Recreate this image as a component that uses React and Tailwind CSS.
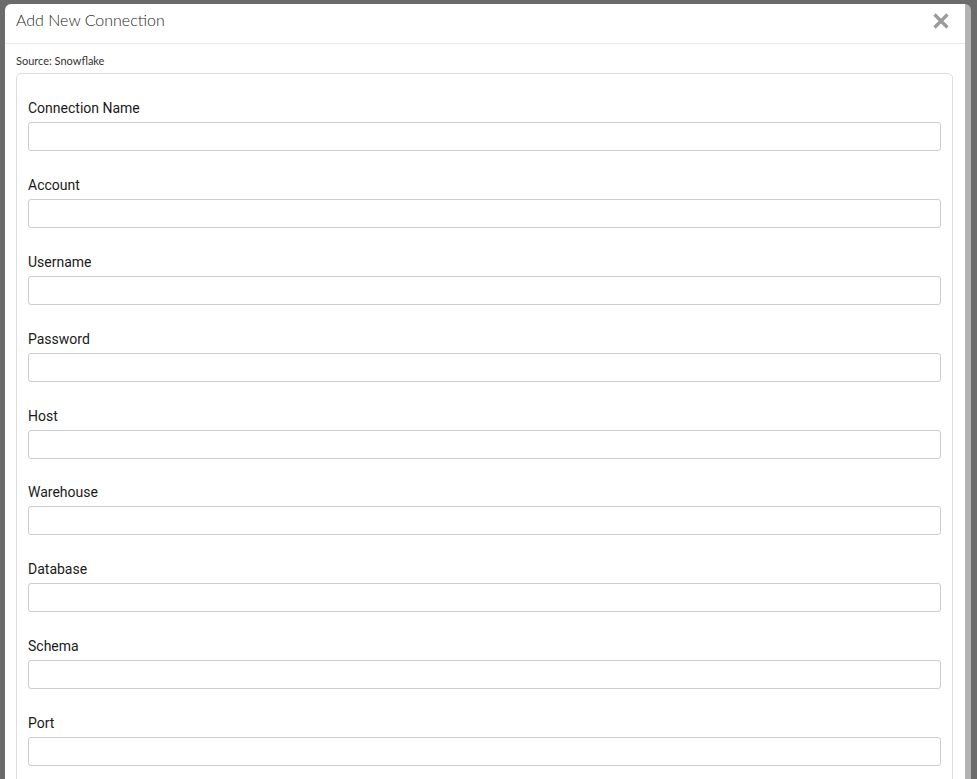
import React from 'react';

const fields = [
  'Connection Name',
  'Account',
  'Username',
  'Password',
  'Host',
  'Warehouse',
  'Database',
  'Schema',
  'Port',
];

const FormField = ({ label }) => (
  <div className="flex flex-col">
    <label className="text-[14px] text-[#1a1a1a] leading-[18px] mb-[5px] font-['Roboto',sans-serif]">{label}</label>
    <input
      type={label === 'Password' ? 'password' : 'text'}
      className="h-[29px] w-full rounded-[3px] border border-[#cccccc] bg-white px-2 outline-none"
    />
  </div>
);

const App = () => {
  return (
    <div className="w-full h-[779px] overflow-hidden bg-[#6b6b6b] pt-[4px] pl-[5px] font-['Liberation_Sans',Arial,sans-serif]">
      <div className="w-[966px] h-full flex rounded-t-[6px] overflow-hidden">
        <div className="w-[960px] h-full bg-white flex flex-col">
          {/* Header */}
          <div className="h-[40px] flex items-start justify-between border-b border-[#e8e8e8] pl-[11px] pr-[15px] pt-[5px] shrink-0">
            <h1 className="text-[16px] font-light text-[#1f1f1f] font-['Lato',sans-serif] leading-[22px]">
              Add New Connection
            </h1>
            <button className="text-[#999] leading-none mt-[3px]">
              <svg width="18" height="18" viewBox="0 0 18 18">
                <path d="M2.5 2.5 L15.5 15.5 M15.5 2.5 L2.5 15.5" stroke="#9a9a9a" strokeWidth="3.2" strokeLinecap="butt" />
              </svg>
            </button>
          </div>

          {/* Body */}
          <div className="pl-[11px] pr-[12px] pt-[10px] flex flex-col">
            <p className="text-[11px] text-[#333] font-['Lato',sans-serif] leading-[14px] mb-[5px]">Source: Snowflake</p>
            <div className="border border-[#dddddd] rounded-[5px] px-[11px] pt-[25px] pb-6 flex flex-col gap-[24.9px]">
              {fields.map((f) => (
                <FormField key={f} label={f} />
              ))}
            </div>
          </div>
        </div>
        <div className="w-[6px] h-full bg-[#b3b3b3]" />
      </div>
    </div>
  );
};

export default App;
